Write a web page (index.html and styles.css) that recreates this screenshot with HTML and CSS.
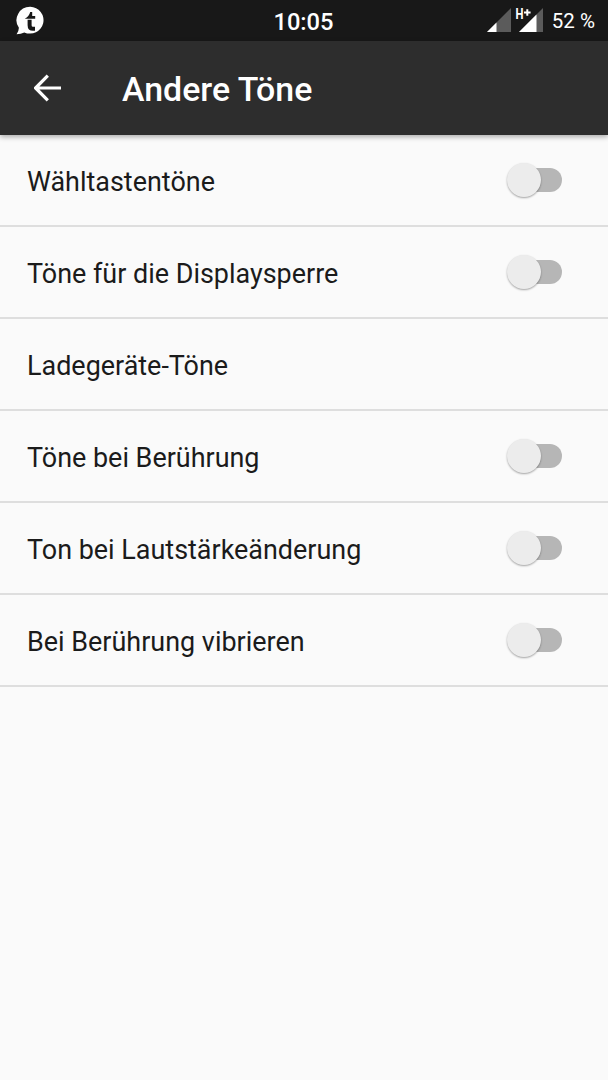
FILE: index.html
```html
<!DOCTYPE html>
<html lang="de">
<head>
<meta charset="utf-8">
<title>Andere Töne</title>
<link rel="stylesheet" href="styles.css">
</head>
<body>
<div class="status-bar">
  <svg class="app-icon" width="30" height="30" viewBox="0 0 30 30">
    <path d="M15.3 0.8a13.6 13.4 0 1 1-6 25.6Q6 27.8 1.6 28.2Q3.7 26 3.9 21.8A13.6 13.4 0 0 1 15.3.8z" fill="#fff"/>
    <path d="M9.8 12.8Q14 10.8 15.2 6h2v3.9h3v2.9z" fill="#181818"/>
    <path d="M14.6 13.8v5.4q0 3.6 3.4 3.6h2" fill="none" stroke="#181818" stroke-width="4"/>
  </svg>
  <span class="clock">10:05</span>
  <div class="status-right">
    <svg class="signals" width="58" height="26" viewBox="0 0 58 26">
      <path d="M1 25L25 1v24z" fill="#5b5b5b"/>
      <path d="M1 25l9.5-9.5V25z" fill="#fff"/>
      <path d="M33 25L57 1v24z" fill="#5b5b5b"/>
      <path d="M33 25L50.5 7.5V25z" fill="#fff"/>
      <text class="network" x="29.6" y="12" textLength="8" lengthAdjust="spacingAndGlyphs">H</text>
      <path d="M38 5.5h6.6M41.3 2.2v6.6" stroke="#fff" stroke-width="2"/>
    </svg>
    <span class="battery">52 %</span>
  </div>
</div>
<header class="app-bar">
  <svg class="back" width="28" height="28" viewBox="0 0 28 28">
    <path d="M27 14H2M13.8 1.7L1.6 14l12.2 12.3" fill="none" stroke="#fff" stroke-width="3.2"/>
  </svg>
  <h1 class="title">Andere Töne</h1>
</header>
<main class="settings">
  <div class="row"><span class="label">Wähltastentöne</span><span class="switch"><span class="thumb"></span></span></div>
  <div class="row"><span class="label">Töne für die Displaysperre</span><span class="switch"><span class="thumb"></span></span></div>
  <div class="row"><span class="label">Ladegeräte-Töne</span></div>
  <div class="row"><span class="label">Töne bei Berührung</span><span class="switch"><span class="thumb"></span></span></div>
  <div class="row"><span class="label">Ton bei Lautstärkeänderung</span><span class="switch"><span class="thumb"></span></span></div>
  <div class="row"><span class="label">Bei Berührung vibrieren</span><span class="switch"><span class="thumb"></span></span></div>
</main>
</body>
</html>
```
FILE: styles.css
```css
* {
  box-sizing: border-box;
}

body {
  margin: 0;
  min-height: 1080px;
  background: #fafafa;
  color: #1b1b1b;
  font-family: Roboto, "Liberation Sans", sans-serif;
}

.status-bar {
  display: grid;
  grid-template-columns: 1fr auto 1fr;
  align-items: center;
  height: 41px;
  padding: 0 13px 0 15px;
  background: #181818;
  color: #fff;
}

.app-icon {
  display: block;
}

.clock {
  margin: 0 1px 0 -2px;
  padding-top: 2px;
  font-size: 23.7px;
  font-weight: 500;
  line-height: 28px;
}

.status-right {
  display: flex;
  align-items: center;
  justify-content: flex-end;
  gap: 8px;
}

.signals {
  display: block;
  margin-bottom: 1px;
}

.network {
  fill: #fff;
  font-size: 14.5px;
  font-weight: 700;
}

.battery {
  font-size: 20.5px;
  line-height: 26px;
  white-space: nowrap;
}

.app-bar {
  display: flex;
  align-items: center;
  height: 94px;
  padding-left: 34px;
  background: #2d2d2d;
  color: #fff;
  box-shadow: 0 2px 5px rgba(0, 0, 0, 0.32);
}

.back {
  display: block;
}

.title {
  margin: 4px 0 0 60px;
  font-size: 33.9px;
  font-weight: 500;
  line-height: 40px;
}

.row {
  display: flex;
  align-items: center;
  justify-content: space-between;
  height: 92px;
  padding: 0 46px 0 27px;
  border-bottom: 2px solid #dedede;
}

.label {
  padding-top: 3px;
  font-size: 26.95px;
  line-height: 32px;
}

.switch {
  display: flex;
  align-items: center;
  width: 50px;
  height: 24px;
  border-radius: 12px;
  background: #b6b6b6;
}

.thumb {
  width: 34px;
  height: 34px;
  margin-left: -5px;
  border-radius: 50%;
  background: #ececec;
  box-shadow: 0 1px 2px rgba(0, 0, 0, 0.35);
}
```
